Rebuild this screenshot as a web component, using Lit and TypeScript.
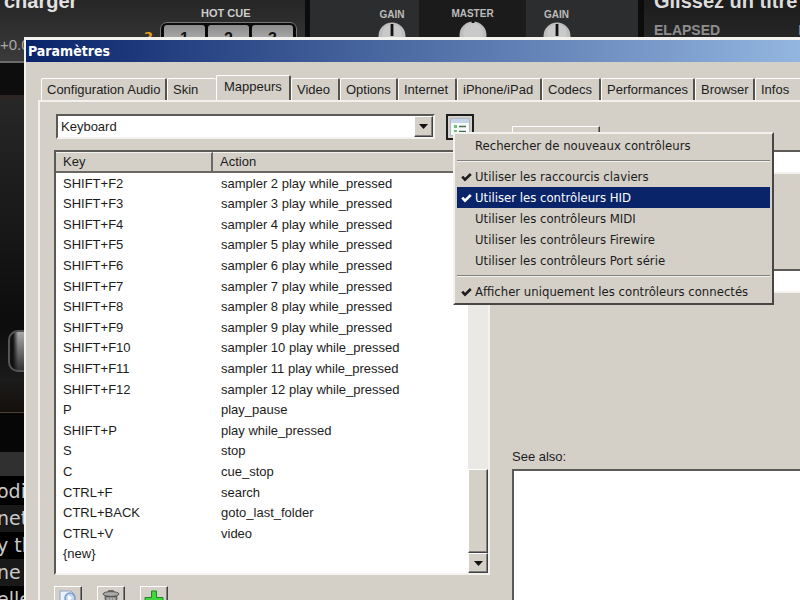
import { LitElement, html, css, svg } from "lit";
import { customElement, state } from "lit/decorators.js";

const TABS = [
  "Configuration Audio", "Skin", "Mappeurs", "Video", "Options", "Internet",
  "iPhone/iPad", "Codecs", "Performances", "Browser", "Infos",
];

const MAPPINGS: [string, string][] = [
  ...Array.from({ length: 11 }, (_, i): [string, string] => [
    `SHIFT+F${i + 2}`,
    `sampler ${i + 2} play while_pressed`,
  ]),
  ["P", "play_pause"],
  ["SHIFT+P", "play while_pressed"],
  ["S", "stop"],
  ["C", "cue_stop"],
  ["CTRL+F", "search"],
  ["CTRL+BACK", "goto_last_folder"],
  ["CTRL+V", "video"],
  ["{new}", ""],
];

type Entry = { label: string; checked?: boolean } | null;

const MENU: Entry[] = [
  { label: "Rechercher de nouveaux contrôleurs" },
  null,
  { label: "Utiliser les raccourcis claviers", checked: true },
  { label: "Utiliser les contrôleurs HID", checked: true },
  { label: "Utiliser les contrôleurs MIDI" },
  { label: "Utiliser les contrôleurs Firewire" },
  { label: "Utiliser les contrôleurs Port série" },
  null,
  { label: "Afficher uniquement les contrôleurs connectés", checked: true },
];

/* The player behind the dialog */
@customElement("dj-backdrop")
export class DjBackdrop extends LitElement {
  static styles = css`
    :host {
      display: flex;
      flex-direction: column;
      height: 100%;
      background: #000;
      color: #ccc;
      font-family: "Liberation Sans", Arial, sans-serif;
      overflow: hidden;
    }
    .top {
      display: grid;
      grid-template-columns: 305px 5px 109px 107px 112px 6px 1fr;
      height: 61px;
      flex: none;
      background: #0c0c0c;
      border-bottom: 2px solid #6a6a6a;
    }
    .deck {
      background: linear-gradient(#262626, #3a3a3a);
      display: grid;
      grid-template-columns: 150px 1fr;
      overflow: hidden;
    }
    .rdeck {
      background: linear-gradient(#1c1c1c, #2c2c2c);
      overflow: hidden;
      padding-left: 10px;
      white-space: nowrap;
    }
    .song {
      font: bold 20px/20px "Liberation Sans", sans-serif;
      margin: -9px 0 25px 4px;
      color: #e2e2e2;
    }
    .song-r {
      font: bold 20px/20px "Liberation Sans", sans-serif;
      margin-top: -9px;
      color: #dcdcdc;
    }
    .pitch { font: 15px/18px "Liberation Sans", sans-serif; color: #a8a8a8; }
    .elapsed {
      display: flex;
      gap: 78px;
      font: bold 14px/18px "Liberation Sans", sans-serif;
      margin-top: 10px;
      color: #8e8e8e;
    }
    .cue { padding-top: 7px; }
    .cue-label {
      font: bold 11px/12px "Liberation Sans", sans-serif;
      margin-left: 51px;
    }
    .pads { display: flex; gap: 3px; }
    .q { color: #e5a21a; font: bold 13px/14px "DejaVu Sans", sans-serif; margin: 11px 4px 0 -6px; }
    .frame {
      display: flex;
      gap: 3px;
      margin-top: 3px;
      padding: 2px 3px 0;
      border: 1px solid #777;
      border-radius: 7px;
      background: #0a0a0a;
    }
    .pad {
      width: 41px;
      height: 32px;
      padding: 6px 0 10px;
      border: 0;
      border-radius: 3px;
      background: linear-gradient(#8c8c8c, #cfcfcf);
      color: #111;
      font: bold 16px/16px "Liberation Sans", sans-serif;
    }
    .mix {
      background: #2c2d2e;
      padding-top: 9px;
      text-align: center;
      font: bold 10px/12px "Liberation Sans", sans-serif;
      color: #bcbcbc;
    }
    .main { background: #1b1b1c; padding-top: 8px; }
    .left { padding-left: 56px; text-align: left; }
    .right { padding-right: 51px; }
    .knob { display: block; width: 28px; height: 28px; margin: 1px auto 0; }
    .left .knob { margin-left: 12px; }
    .left span { display: block; width: 52px; text-align: center; }
    .gap { height: 32px; background: #0d0d0d; flex: none; }
    .body {
      flex: none;
      height: 318px;
      width: 60px;
      background: linear-gradient(#272727, #0c0c0c 72%, #1b1b1b 90%, #15100c);
      border-top: 4px solid #2c2423;
      border-bottom: 1px solid #4a4038;
      display: flex;
      align-items: flex-end;
      box-sizing: border-box;
    }
    .slider {
      width: 60px;
      height: 38px;
      margin: 0 0 40px 8px;
      border: 2px solid #555;
      border-radius: 10px;
      background: linear-gradient(90deg, #111 3px, transparent 8px), linear-gradient(#aaa, #333);
    }
    .strip { height: 39px; flex: none; background: #060606; }
    .head { height: 24px; flex: none; background: #303030; }
    .files { margin: 0; padding: 2px 0 0; list-style: none; font: 19px/26px "DejaVu Sans", sans-serif; }
    .files li { height: 27px; margin-left: -3px; color: #c9c9c9; }
    .files li:nth-child(even) { background: #191919; }
  `;

  private knob(mark: boolean) {
    return html`<svg class="knob" viewBox="0 0 28 28">
      <circle cx="14" cy="14" r="13.5" fill="#bdbdbd"></circle>
      <circle cx="14" cy="12" r="10" fill="#d0d0d0" opacity=".6"></circle>
      <rect x="12.6" y=${mark ? 2 : 0} width="2.8" height=${mark ? 12 : 2} fill="#111"></rect>
    </svg>`;
  }

  render() {
    return html`
      <div class="top">
        <div class="deck">
          <div>
            <div class="song">charger</div>
            <div class="pitch">+0.0</div>
          </div>
          <div class="cue">
            <div class="cue-label">HOT CUE</div>
            <div class="pads">
              <span class="q">2</span>
              <div class="frame">
                <button class="pad">1</button><button class="pad">2</button><button class="pad">3</button>
              </div>
            </div>
          </div>
        </div>
        <div></div>
        <div class="mix left"><span>GAIN</span>${this.knob(true)}</div>
        <div class="mix main">MASTER${this.knob(false)}</div>
        <div class="mix right">GAIN${this.knob(true)}</div>
        <div></div>
        <div class="rdeck">
          <div class="song-r">Glissez un titre</div>
          <div class="elapsed"><span>ELAPSED</span><span>REMAIN</span></div>
        </div>
      </div>
      <div class="gap"></div>
      <div class="body"><div class="slider"></div></div>
      <div class="strip"></div>
      <div class="head"></div>
      <ul class="files">
        <li>odi</li>
        <li>net</li>
        <li>y th</li>
        <li>ne</li>
        <li>elle</li>
      </ul>
    `;
  }
}

@customElement("app-root")
export class AppRoot extends LitElement {
  @state() private tab = 2;
  @state() private hot = 3;

  static styles = css`
    :host {
      display: block;
      position: relative;
      height: 100vh;
      overflow: hidden;
      font: 13px/16px "Liberation Sans", Arial, sans-serif;
      color: #1c1c1c;
    }
    * { box-sizing: border-box; }
    button, select, input, textarea { font: inherit; color: inherit; border-radius: 0; }
    .window {
      position: absolute;
      left: 24px;
      top: 37px;
      right: -110px;
      bottom: -60px;
      background: #d4d0c8;
      border: 3px solid #f4f2ee;
      border-right-color: #404040;
      border-left-width: 2px;
    }
    .title {
      height: 22px;
      margin: 0;
      padding-left: 2px;
      background: linear-gradient(90deg, #0a246a, #a6caf0);
      color: #fff;
      font: bold 14px/22px "DejaVu Sans Condensed", Verdana, sans-serif;
    }
    .content { padding: 13px 0 0 12px; }
    .tabs {
      display: grid;
      grid-template-columns: 126px 49px 75px 49px 58px 59px 85px 59px 94px 60px 60px;
      align-items: end;
      padding-left: 3px;
    }
    .tab {
      height: 22px;
      padding: 0 0 0 5px;
      border: 0;
      border-top: 1px solid #fff;
      border-left: 1px solid #fff;
      border-right: 2px solid #55524c;
      border-radius: 2px 2px 0 0;
      background: #d4d0c8;
      text-align: left;
      white-space: nowrap;
    }
    .tab.before { border-right: 0; }
    .tab.on { height: 25px; padding: 0 0 2px 7px; }
    .panel {
      display: grid;
      grid-template-columns: 436px 1fr;
      gap: 22px;
      padding: 12px 0 0 14px;
      border-top: 2px solid #f4f2ee;
      border-left: 2px solid #f4f2ee;
    }
    .picker { display: flex; gap: 11px; margin: 0 0 10px 2px; width: 418px; }
    .combo {
      flex: 1;
      height: 25px;
      display: flex;
      position: relative;
      background: #fff;
      border: 2px solid;
      border-color: #5c5a56 #f4f2ee #f4f2ee #5c5a56;
    }
    .combo select {
      flex: 1;
      appearance: none;
      border: 0;
      outline: 0;
      padding: 0 3px;
      background: #fff;
    }
    .raised {
      background: #d4d0c8;
      border: 1px solid;
      border-color: #fff #404040 #404040 #fff;
      box-shadow: inset -1px -1px #808080;
      display: flex;
      align-items: center;
      justify-content: center;
      padding: 0;
    }
    .drop { width: 19px; pointer-events: none; }
    .anchor { position: relative; z-index: 2; }
    .opts {
      width: 28px;
      height: 26px;
      padding: 0;
      border: 2px solid #1d1d1d;
      background: #d4d0c8;
      display: flex;
      align-items: center;
      justify-content: center;
    }
    .menu {
      position: absolute;
      left: 7px;
      top: 18px;
      width: 321px;
      padding: 1px 2px;
      background: #d4d0c8;
      border: 2px solid;
      border-color: #f4f2ee #484642 #484642 #f4f2ee;
      font: 13px/20px "DejaVu Sans Condensed", Tahoma, sans-serif;
    }
    .item {
      display: flex;
      align-items: center;
      width: 100%;
      height: 21px;
      padding: 0;
      border: 0;
      background: none;
      text-align: left;
      white-space: nowrap;
    }
    .item.hot { background: #0a246a; color: #fff; }
    .tick { width: 18px; height: 18px; display: flex; align-items: center; justify-content: center; }
    .rule {
      height: 2px;
      margin: 4px 0;
      border: 0;
      border-top: 1px solid #808080;
      border-bottom: 1px solid #f4f2ee;
    }
    .list {
      display: flex;
      height: 425px;
      background: #fff;
      border: 2px solid;
      border-color: #5c5a56 #f4f2ee #f4f2ee #5c5a56;
    }
    .scroller { flex: 1; overflow: hidden; }
    table { width: 100%; border-collapse: separate; border-spacing: 0; table-layout: fixed; }
    th {
      height: 21px;
      padding: 0 7px;
      font-weight: normal;
      text-align: left;
      background: #d4d0c8;
      border-bottom: 2px solid #6c6964;
      border-right: 2px solid #6c6964;
      border-top: 1px solid #f4f2ee;
    }
    .key { width: 157px; }
    td { height: 21px; padding: 0 7px; white-space: nowrap; line-height: 16px; }
    td + td { padding-left: 8px; }
    tr:nth-child(5n + 2) td, tr:nth-child(5n + 4) td { height: 20px; }
    .bar { width: 20px; display: flex; flex-direction: column; background: #ebe9e6; }
    .bar .raised { flex: none; height: 20px; }
    .space { flex: 1; }
    .bar .thumb { height: 84px; }
    .tools { display: flex; gap: 15px; padding-top: 11px; }
    .tool { width: 28px; height: 28px; }
    .side { display: flex; flex-direction: column; padding-top: 12px; }
    .learn { width: 88px; height: 16px; flex: none; }
    .field {
      height: 24px;
      flex: none;
      background: #fff;
      border: 2px solid;
      border-color: #5c5a56 #f4f2ee #f4f2ee #5c5a56;
      outline: 0;
    }
    .first { margin: 8px 0 95px; }
    .side label { margin: 156px 0 4px; line-height: 16px; }
    .also { height: 200px; resize: none; }
  `;

  private arrow() {
    return html`<svg width="9" height="5" viewBox="0 0 9 5"><path d="M0 0h9L4.5 5z" fill="#111"></path></svg>`;
  }

  private tick() {
    return svg`<svg width="11" height="10" viewBox="0 0 11 10"><path d="M1.2 4.6 L4 7.6 L9.8 2" fill="none" stroke="currentColor" stroke-width="2.6"/></svg>`;
  }

  render() {
    return html`
      <dj-backdrop></dj-backdrop>
      <section class="window" role="dialog" aria-labelledby="title">
        <h1 class="title" id="title">Paramètres</h1>
        <div class="content">
          <div class="tabs" role="tablist">
            ${TABS.map((t, i) => html`<button
              role="tab"
              class="tab ${i === this.tab ? "on" : ""} ${i === this.tab - 1 ? "before" : ""}"
              aria-selected=${i === this.tab}
              @click=${() => (this.tab = i)}
            >${t}</button>`)}
          </div>
          <div class="panel">
            <div>
              <div class="picker">
                <div class="combo">
                  <select aria-label="Mappeur"><option>Keyboard</option></select>
                  <span class="raised drop">${this.arrow()}</span>
                </div>
                <div class="anchor">
                  <button class="opts" aria-label="Options" aria-haspopup="menu">
                    <svg width="20" height="18" viewBox="0 0 20 18">
                      <rect x=".5" y=".5" width="19" height="17" fill="#f6faf8" stroke="#a9b8c4"></rect>
                      <rect x="1" y="1" width="18" height="4" fill="#c3d5e6"></rect>
                      <path d="M4 7h3v3H4zM4 12h3v3H4z" fill="#6cc078"></path>
                      <path d="M9 8.500h7M9 13.500h7" stroke="#4e6b62" stroke-width="1.3"></path>
                    </svg>
                  </button>
                  <div class="menu" role="menu">
                    ${MENU.map((e, i) => e
                      ? html`<button
                          class="item ${i === this.hot ? "hot" : ""}"
                          role="menuitemcheckbox"
                          aria-checked=${!!e.checked}
                          @mouseenter=${() => (this.hot = i)}
                        ><span class="tick">${e.checked ? this.tick() : ""}</span>${e.label}</button>`
                      : html`<hr class="rule">`)}
                  </div>
                </div>
              </div>
              <div class="list">
                <div class="scroller">
                  <table>
                    <thead><tr><th class="key">Key</th><th>Action</th></tr></thead>
                    <tbody>
                      ${MAPPINGS.map(([k, a]) => html`<tr><td>${k}</td><td>${a}</td></tr>`)}
                    </tbody>
                  </table>
                </div>
                <div class="bar">
                  <button class="raised" aria-label="Haut"></button>
                  <div class="space"></div>
                  <div class="raised thumb"></div>
                  <button class="raised" aria-label="Bas">${this.arrow()}</button>
                </div>
              </div>
              <div class="tools">
                <button class="raised tool" aria-label="Dupliquer">
                  <svg width="20" height="20" viewBox="0 0 20 20">
                    <path d="M2 1h11l3 3v14H2z" fill="#eaf1fb" stroke="#8fa5c8"></path>
                    <circle cx="12" cy="8" r="5" fill="#c3d8f3" stroke="#7c9ac6" stroke-width="1.5"></circle>
                    <path d="M10 5l4 3-4 3z" fill="#fff"></path>
                  </svg>
                </button>
                <button class="raised tool" aria-label="Supprimer">
                  <svg width="20" height="20" viewBox="0 0 20 20">
                    <ellipse cx="10" cy="4" rx="8" ry="2.4" fill="#a9a9a9" stroke="#555"></ellipse>
                    <path d="M7.500 2V.7h5V2" fill="none" stroke="#555"></path>
                    <path d="M4 6.500h12l-1 12H5z" fill="#8d8d8d" stroke="#555"></path>
                    <path d="M7 8v9M10 8v9M13 8v9" stroke="#ccc"></path>
                  </svg>
                </button>
                <button class="raised tool" aria-label="Ajouter">
                  <svg width="20" height="20" viewBox="0 0 20 20">
                    <path d="M7.500 1h5v6.500H19v5h-6.500V19h-5v-6.500H1v-5h6.500z" fill="#3fd63a" stroke="#22852a"></path>
                  </svg>
                </button>
              </div>
            </div>
            <div class="side">
              <button class="raised learn" aria-label="Apprendre"></button>
              <input class="field first" aria-label="Key">
              <input class="field" aria-label="Action">
              <label for="also">See also:</label>
              <textarea class="field also" id="also"></textarea>
            </div>
          </div>
        </div>
      </section>
    `;
  }
}
